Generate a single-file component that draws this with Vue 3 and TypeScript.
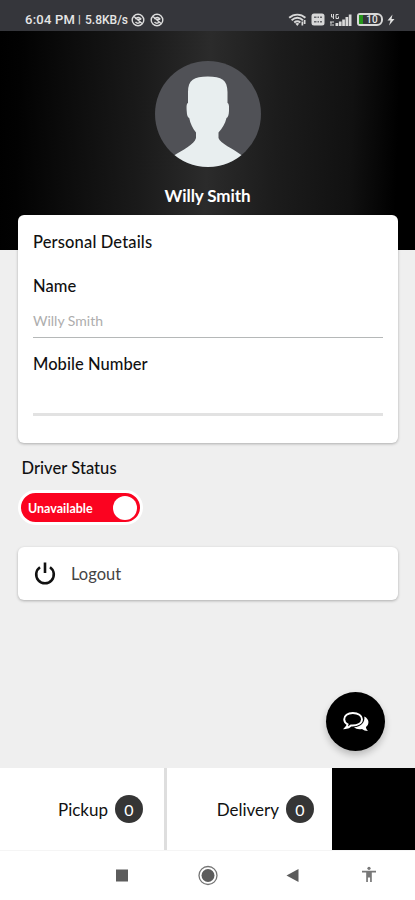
<script setup lang="ts">
import { ref } from 'vue'

interface Tab {
  label: string
  count: number
}

const driver = ref({ name: 'Willy Smith', mobile: '' })
const status = ref('Unavailable')
const tabs: Tab[] = [
  { label: 'Pickup', count: 0 },
  { label: 'Delivery', count: 0 },
]
</script>

<template>
  <div class="screen">
    <div class="statusbar">
      <span class="clock">6:04 PM</span>
      <span class="bar">|</span>
      <span class="speed">5.8KB/s</span>
      <svg v-for="n in 2" :key="n" class="muted" viewBox="0 0 14 14">
        <circle cx="7" cy="7" r="5.800" />
        <path d="M3 3.400 11 10.600M4.200 6C6.500 3.300 9 4.300 10.300 6.300M4.500 9C6 10.600 8 10.300 9.400 9M6.500 6.200h3.500" />
      </svg>
      <div class="system">
        <svg class="wifi" viewBox="0 0 19 14">
          <path d="M1.200 4.800C6 .5 12.600 .5 17.400 4.800M3.600 7.300C7.200 4.200 11.400 4.200 15 7.300M6.200 9.600C8.300 7.900 10.300 7.900 12.400 9.600" />
          <path class="solid" d="M7.300 10.600Q9.300 9.200 11.300 10.600L9.300 13zM13.500 12.500v-4l1.700 0v4zM15.800 11V7h1.700v4z" />
        </svg>
        <svg class="volte" viewBox="0 0 14 13">
          <rect x=".5" y=".5" width="13" height="12" rx="2.500" />
          <path d="M3 4.300h2.500M6.500 4.300h1.500M9 4.300h2M3 8.700h2.500M6.500 8.700h1.500M9 8.700h2" />
        </svg>
        <svg class="signal" viewBox="0 0 23 14">
          <path d="M2.500 1v3H5M4.500 1v5M9.500 1.500H7v4h2.500v-2M1 9h4M2 9v4M4 11v2" />
          <path class="solid" d="M6.500 10h2.700v3H6.500zM9.900 8.500h2.700V13h-2.700zM13.200 6.500h2.700V13h-2.700zM16.500 4h2.700v9h-2.700zM19.800 1.500h2.700V13h-2.700z" />
        </svg>
        <div class="battery"><span class="charge"></span><span class="level">10</span></div>
        <svg class="bolt" viewBox="0 0 8 12"><path d="M5.500.5.500 6.500H3.500L2 11.500 7.500 5H4.500z" /></svg>
      </div>
    </div>

    <header class="hero">
      <svg class="avatar" viewBox="0 0 106 106">
        <defs><clipPath id="disc"><circle cx="53" cy="53" r="53" /></clipPath></defs>
        <circle cx="53" cy="53" r="53" fill="#505156" />
        <path
          clip-path="url(#disc)"
          fill="#e8eeef"
          d="M33 42V31C33 19 39 15.500 52.800 15.500S72.500 19 72.500 31V42C74.200 42.500 74.200 46 74 50C73.800 54 73 56.500 71.500 57C70 63 67.500 67 63.500 71.500V77C65 82.500 78 87.500 87 94.500V106H19V94.500C27 89.500 39.500 83.500 41 77V71.500C37.500 67 35.500 63 34.200 57C32.500 56.500 31.900 54 31.700 50C31.500 46 31.300 42.500 33 42Z"
        />
      </svg>
      <h1 class="driver-name">{{ driver.name }}</h1>
    </header>

    <main class="content">
      <section class="card details">
        <h2 class="label title">Personal Details</h2>
        <h3 class="label name-label">Name</h3>
        <div class="field">{{ driver.name }}</div>
        <h3 class="label mobile-label">Mobile Number</h3>
        <div class="field empty">{{ driver.mobile }}</div>
      </section>

      <h2 class="label status-label">Driver Status</h2>
      <button class="toggle">
        <span class="toggle-text">{{ status }}</span>
        <span class="knob"></span>
      </button>

      <section class="card logout">
        <svg class="power" viewBox="0 0 22 24">
          <path d="M6 5.200A8.800 8.800 0 1 0 16 5.200M11 .500v10.500" />
        </svg>
        <span class="logout-text">Logout</span>
      </section>

      <button class="chat">
        <svg viewBox="0 0 28 24">
          <path class="solid" d="M22.300 6.500C27.600 9 27.500 14.800 23.900 17C24.100 18.800 25 19.900 26 21C23.400 20.900 21.500 20.200 20 19C16.500 19.600 13.700 18.900 12 17.300C18.800 17 23.200 12.500 22.300 6.500Z" />
          <path class="outline" d="M10.800 3C5.700 3 2.200 5.700 2.200 9.200C2.200 11.400 3.500 13.200 5.600 14.300C5.400 15.700 4.500 17 3.500 18C6 17.800 7.800 16.800 9 15.500C15.500 16 20 13.200 20 9.200C20 5.700 16.200 3 10.800 3Z" />
        </svg>
      </button>
    </main>

    <nav class="tabs">
      <div v-for="tab in tabs" :key="tab.label" class="tab">
        <span>{{ tab.label }}</span>
        <span class="badge">{{ tab.count }}</span>
      </div>
      <div class="filler"></div>
    </nav>

    <footer class="sysnav">
      <svg viewBox="0 0 415 49">
        <rect x="116" y="18.500" width="12" height="12" fill="#5c5c5c" />
        <circle cx="208" cy="24.500" r="9" fill="none" stroke="#747474" stroke-width="1.300" />
        <circle cx="208" cy="24.500" r="6.500" fill="#5c5c5c" />
        <path d="M298.500 18v13L286.500 24.500z" fill="#5c5c5c" />
        <circle cx="369" cy="17.300" r="1.600" fill="#777" />
        <path d="M362 19.700h14v1.800h-4.200v9.500h-1.700V26.500h-2.200v4.500h-1.700V21.500H362z" fill="#777" />
      </svg>
    </footer>
  </div>
</template>

<style>
body {
  margin: 0;
  background: #fff;
}
</style>

<style scoped>
* {
  box-sizing: border-box;
}
.screen {
  width: 415px;
  height: 900px;
  display: flex;
  flex-direction: column;
  overflow: hidden;
  font-family: Lato, sans-serif;
  color: #111;
}
.statusbar {
  height: 31px;
  padding: 8px 20px 0 25px;
  background: #35363b;
  color: #e6e6e6;
  display: flex;
  align-items: center;
  font-family: Roboto, sans-serif;
  font-weight: 500;
}
.clock {
  font-size: 13px;
  letter-spacing: 0.25px;
  width: 53px;
  white-space: nowrap;
}
.bar {
  font-size: 11px;
  width: 7px;
}
.speed {
  font-size: 12px;
  width: 46px;
  white-space: nowrap;
}
.muted {
  width: 14px;
  height: 14px;
  margin-right: 5px;
  fill: none;
  stroke: #dcdcdc;
  stroke-width: 1.4;
}
.system {
  margin-left: auto;
  display: flex;
  align-items: center;
  gap: 4px;
}
.system svg {
  fill: none;
  stroke: #d8d8d8;
  stroke-width: 1.9;
}
.system .solid {
  fill: #d8d8d8;
  stroke: none;
}
.wifi {
  width: 19px;
  height: 14px;
}
.volte {
  width: 14px;
  height: 13px;
}
.system .volte rect {
  fill: #d8d8d8;
  stroke: none;
}
.system .volte path {
  stroke: #66676b;
  stroke-width: 1.4;
}
.signal {
  width: 23px;
  height: 14px;
}
.system .signal path:first-child {
  stroke-width: 1;
}
.battery {
  width: 26px;
  height: 13px;
  margin-left: 1px;
  border: 2px solid #d8d8d8;
  border-radius: 3px 6px 6px 3px;
  display: flex;
  align-items: center;
}
.charge {
  width: 4px;
  height: 9px;
  background: #25961b;
}
.level {
  flex: 1;
  font-size: 10px;
  line-height: 9px;
  text-align: center;
}
.bolt {
  width: 8px;
  height: 12px;
}
.system .bolt path {
  fill: #e0e0e0;
  stroke: none;
}
.hero {
  height: 219px;
  flex: none;
  padding-top: 30px;
  background: linear-gradient(92deg, #000 0%, #020202 5%, #1a1a1a 34%, #2b2b2b 50%, #1c1c1c 66%, #111 84%, #000 95%);
  display: flex;
  flex-direction: column;
  align-items: center;
}
.avatar {
  width: 106px;
  height: 106px;
}
.driver-name {
  margin: 18px 0 0;
  font-size: 17px;
  line-height: 22px;
  font-weight: 700;
  letter-spacing: -0.1px;
  color: #fff;
}
.content {
  height: 518px;
  flex: none;
  padding: 0 17px 0 18px;
  background: #efefef;
  display: flex;
  flex-direction: column;
  align-items: flex-start;
}
.card {
  width: 380px;
  background: #fff;
  border-radius: 6px;
  box-shadow: 0 1px 3px rgba(0, 0, 0, 0.28);
}
.details {
  height: 228px;
  margin-top: -35px;
  padding: 17px 15px 0;
}
.label {
  margin: 0;
  font-size: 16.500px;
  line-height: 20px;
  font-weight: 500;
  letter-spacing: 0.05px;
}
.title {
  letter-spacing: 0.15px;
}
.name-label {
  margin-top: 24px;
}
.field {
  height: 42px;
  padding-top: 15px;
  border-bottom: 1px solid #b5b8b8;
  font-size: 14px;
  line-height: 20px;
  color: #adadad;
}
.mobile-label {
  margin-top: 16px;
}
.field.empty {
  border-bottom: 3px solid #e2e2e2;
}
.status-label {
  margin: 15px 0 0 3.500px;
}
.toggle {
  width: 125px;
  height: 35px;
  margin: 12px 0 0;
  padding: 0 3px 0 7px;
  border: 3px solid #fff;
  border-radius: 18px;
  background: #fb0320;
  display: flex;
  align-items: center;
  justify-content: space-between;
}
.toggle-text {
  font-family: Lato, sans-serif;
  font-size: 12.500px;
  font-weight: 700;
  color: #fff;
  padding-top: 2px;
}
.knob {
  width: 24px;
  height: 24px;
  border-radius: 50%;
  background: #fff;
}
.logout {
  height: 53px;
  margin-top: 22px;
  padding-left: 16px;
  display: flex;
  align-items: center;
}
.power {
  width: 22px;
  height: 24px;
  fill: none;
  stroke: #111;
  stroke-width: 2.6;
}
.logout-text {
  margin-left: 15px;
  font-size: 16.500px;
  color: #444;
}
.chat {
  width: 59px;
  height: 59px;
  margin: 92px 13px 0 auto;
  padding: 0;
  border: 0;
  border-radius: 50%;
  background: #000;
  box-shadow: 0 4px 7px rgba(0, 0, 0, 0.22);
  display: flex;
  align-items: center;
  justify-content: center;
}
.chat svg {
  width: 28px;
  height: 24px;
}
.chat .solid {
  fill: #fff;
}
.chat .outline {
  fill: #000;
  stroke: #fff;
  stroke-width: 1.9;
}
.tabs {
  height: 83px;
  flex: none;
  display: grid;
  grid-template-columns: 167px 165px 83px;
  border-bottom: 1px solid #f5f5f5;
}
.tab {
  padding-right: 21px;
  display: flex;
  align-items: center;
  justify-content: flex-end;
  gap: 7px;
  font-size: 17px;
  background: #fff;
}
.tab:first-child {
  border-right: 3px solid #dedede;
}
.tab:nth-child(2) {
  padding-right: 18px;
}
.badge {
  width: 28px;
  height: 28px;
  border-radius: 50%;
  background: #353535;
  color: #fff;
  font-size: 16px;
  display: flex;
  align-items: center;
  justify-content: center;
}
.filler {
  background: #000;
}
.sysnav {
  height: 49px;
}
.sysnav svg {
  display: block;
  width: 415px;
  height: 49px;
}
</style>
